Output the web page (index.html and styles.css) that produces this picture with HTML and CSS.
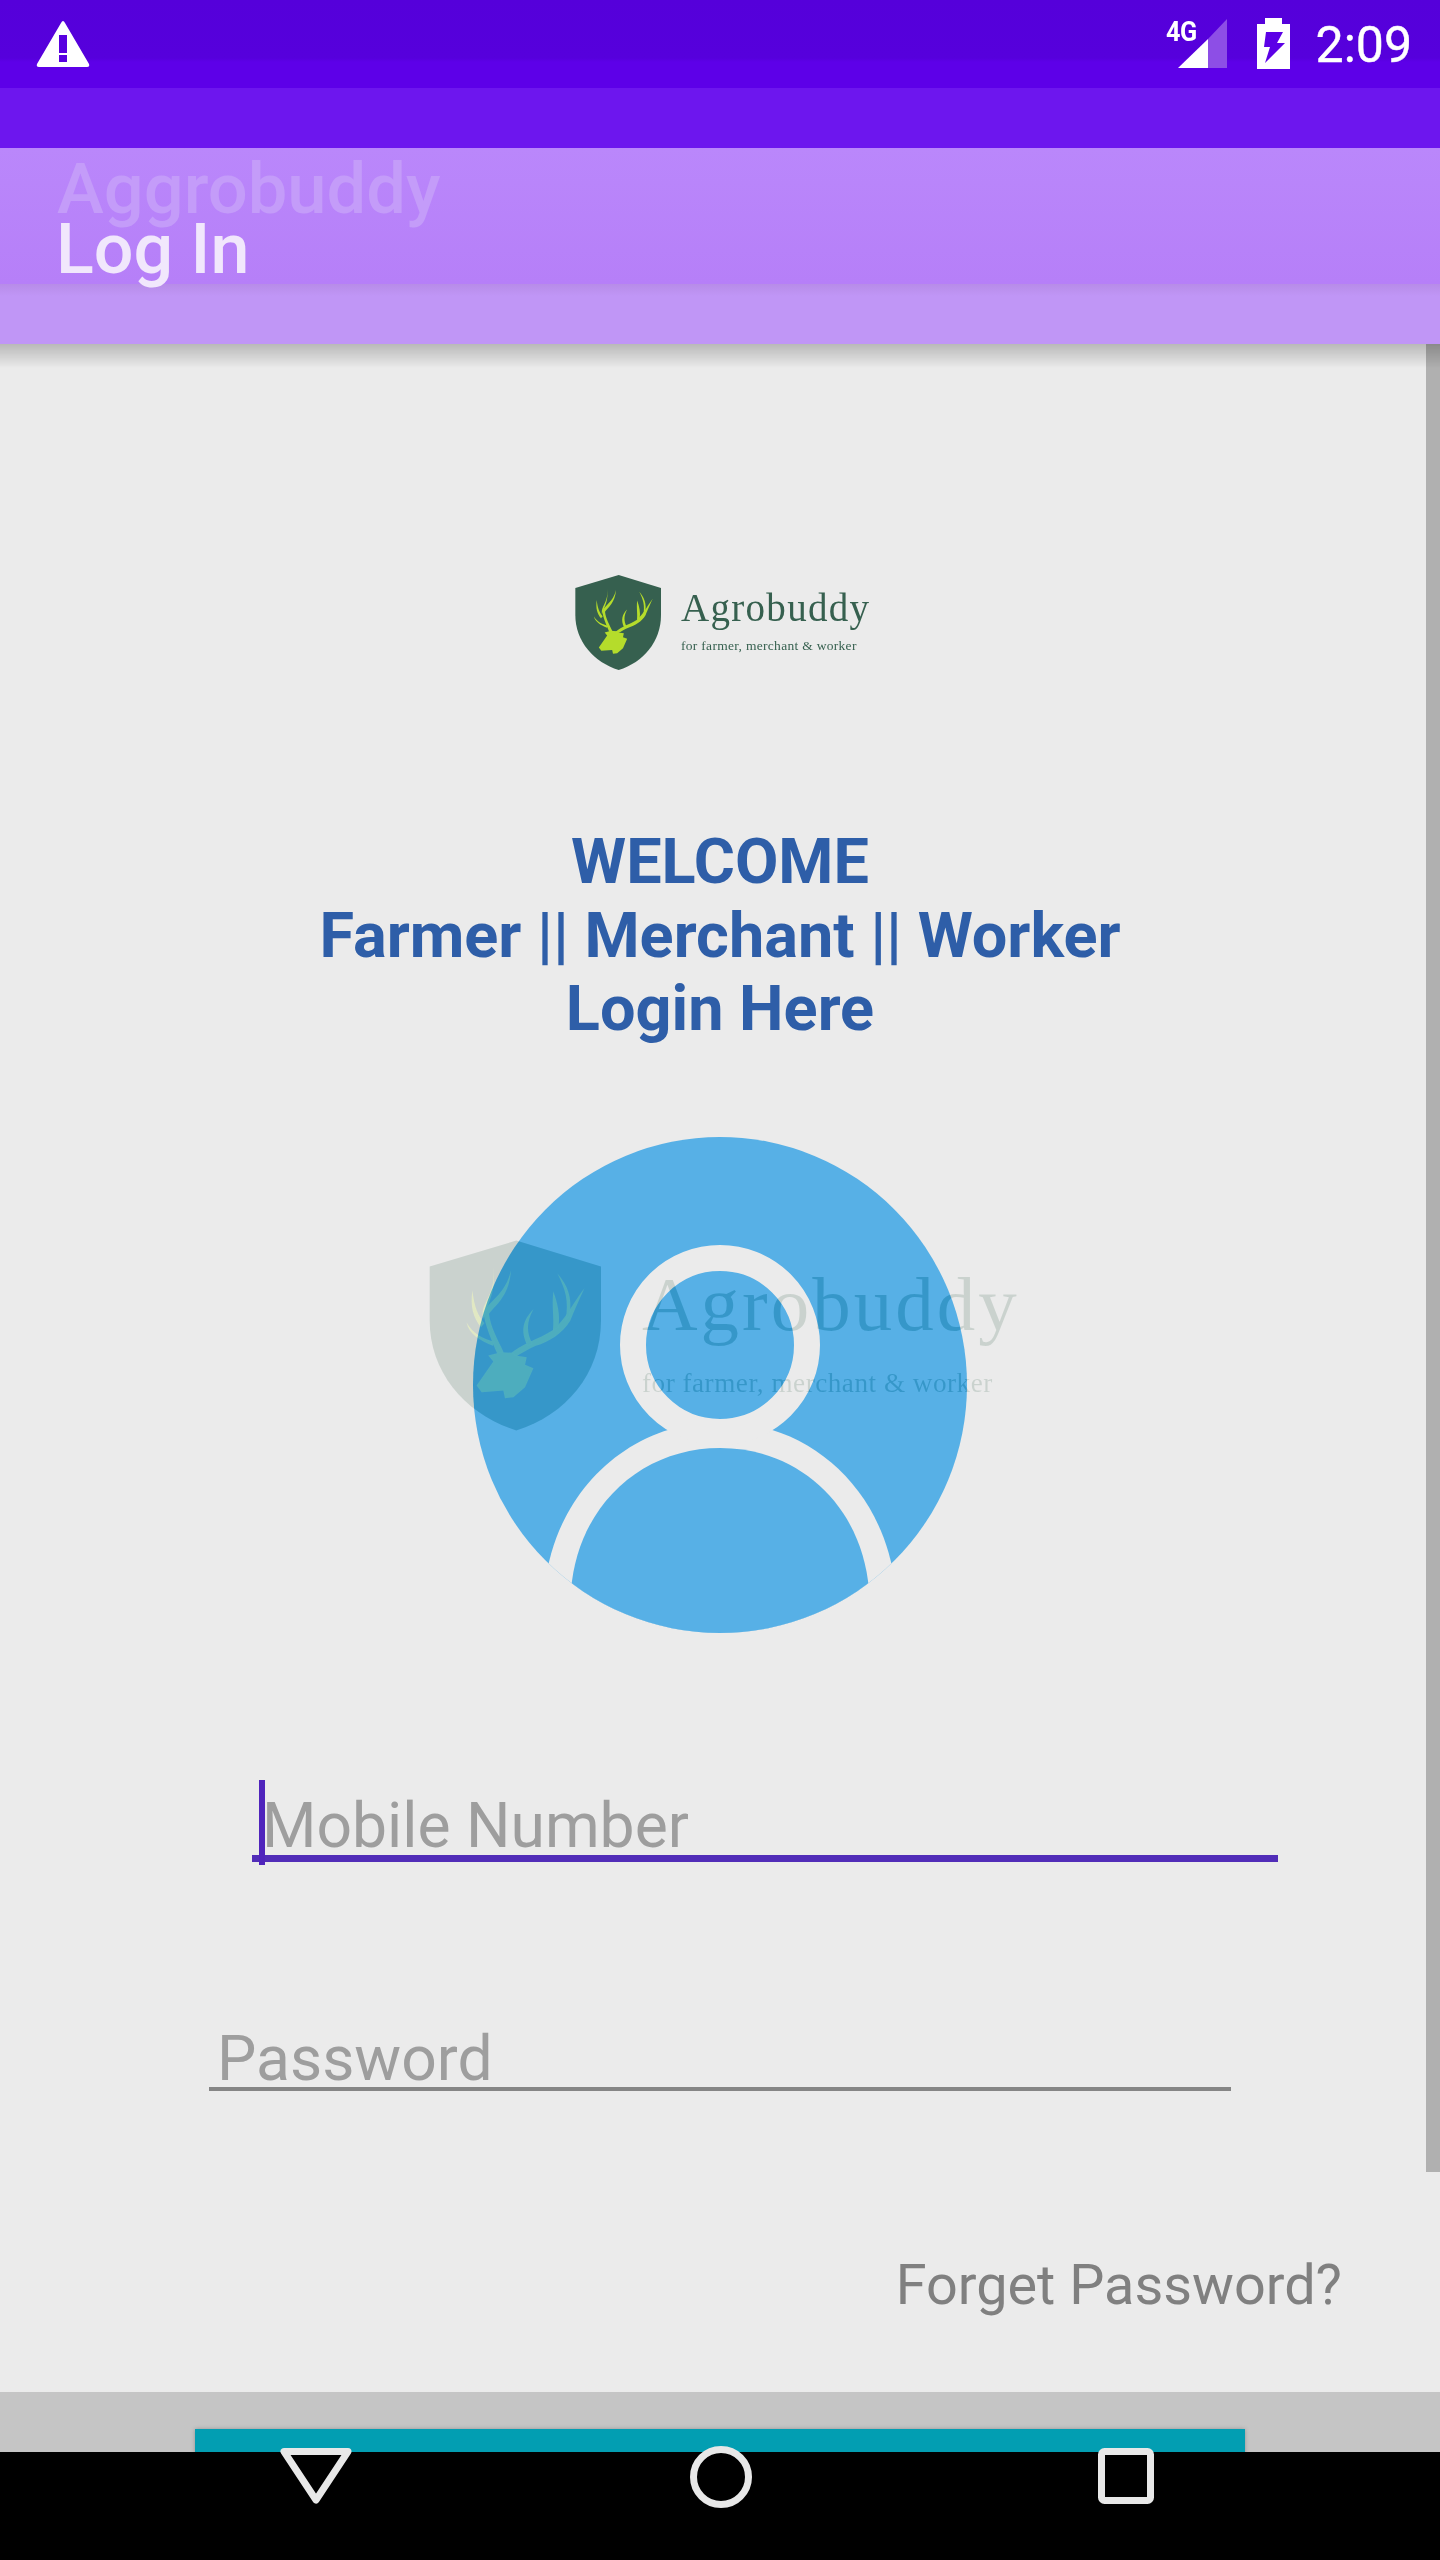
FILE: index.html
```html
<!DOCTYPE html>
<html lang="en">
<head>
<meta charset="utf-8">
<title>Log In</title>
<link rel="stylesheet" href="styles.css">
</head>
<body>
<svg class="defs" width="0" height="0" aria-hidden="true">
  <symbol id="crest" viewBox="0 0 258 285">
    <path class="crest-shield" d="M131 0 L258 39 V120 C258 200 205 262 131 285 C57 262 1 200 1 120 V39 Z"/>
    <g class="crest-deer">
      <path d="M103 171 C94 150 83 125 82 108 C90 90 114 82 123 45 C120 84 100 96 90 110 C92 130 104 150 112 168 Z"/>
      <path d="M96.500 41 C99 68 92 78 84 96 C80 104 80 110 81 118 L86 104 C92 88 100 72 96.500 41 Z"/>
      <path d="M65 75 C62 100 66 115 78 130 L83 124 C73 112 68 100 65 75 Z"/>
      <path d="M56.500 123.500 C60 140 76 150 96 158 L98 152 C80 147 66 140 56.500 123.500 Z"/>
      <path d="M121 171 C138 155 165 148 185 135 C205 118 212 100 233 71.500 C222 96 218 105 212 120 C200 140 180 152 160 158 C148 163 138 170 129 175 Z"/>
      <path d="M193 50 C208 68 215 85 211 112 L205 120 C210 90 205 75 193 50 Z"/>
      <path d="M186.500 76.500 C184 100 188 115 186 135 L194 130 C197 112 193 95 186.500 76.500 Z"/>
      <path d="M156.500 103.500 C142 118 136 135 148 158 L155 155 C146 138 146 122 156.500 103.500 Z"/>
      <path d="M108 167.500 L89 172.500 L96.500 181.500 L71.500 217.500 L79 227.500 L111.500 225 L114 236.500 L126.500 235 L144 220 L156.500 191.500 L144 186.500 L146.500 175 L129 172.500 L125 168.500 Z"/>
    </g>
  </symbol>
</svg>

<div class="screen">
  <header class="statusbar">
    <svg class="warn" width="54" height="48" viewBox="0 0 54 48">
      <path d="M27 1 Q28 1 29 3 L53 44 Q54 47 51 47 H3 Q0 47 1 44 L25 3 Q26 1 27 1 Z" fill="#fff"/>
      <rect x="23" y="15" width="8" height="18" fill="#5800e0"/>
      <rect x="23" y="35" width="8" height="7" fill="#5800e0"/>
    </svg>
    <div class="status-right">
      <div class="signal">
        <span class="signal-label">4G</span>
        <svg width="50" height="50" viewBox="0 0 50 50">
          <path d="M49 0 V49 H30 V20 Z" fill="#8d4ee6"/>
          <path d="M30 20 V49 H0 Z" fill="#fff"/>
        </svg>
      </div>
      <svg class="battery" width="33" height="51" viewBox="0 0 33 51">
        <path d="M8 0 H25 V6 H33 V51 H0 V6 H8 Z" fill="#fff"/>
        <path d="M9 14 H26 L20 25 H28 L8 45 L13 29 H7 Z" fill="#5c00e6"/>
      </svg>
      <span class="clock">2:09</span>
    </div>
  </header>

  <div class="band"></div>

  <div class="appbar">
    <div class="appbar-main">
      <div class="title-old">Aggrobuddy</div>
      <div class="title-new">Log In</div>
    </div>
    <div class="appbar-strip"></div>
  </div>

  <main class="content">
    <div class="scrollthumb"></div>

    <div class="logo logo-top">
      <svg class="logo-crest"><use href="#crest"/></svg>
      <div class="logo-text">
        <div class="logo-name">Agrobuddy</div>
        <div class="logo-tag">for farmer, merchant &amp; worker</div>
      </div>
    </div>

    <h1 class="welcome">WELCOME<br>Farmer || Merchant || Worker<br>Login Here</h1>

    <div class="avatar">
      <svg width="494" height="496" viewBox="473 1137 494 496">
        <defs>
          <clipPath id="avatar-clip"><ellipse cx="720" cy="1385" rx="247" ry="248"/></clipPath>
        </defs>
        <ellipse cx="720" cy="1385" rx="247" ry="248" fill="#57b0e6"/>
        <g clip-path="url(#avatar-clip)">
          <path d="M545 1640 V1585 C556 1490 630 1422 720 1422 C810 1422 884 1490 895 1585 V1640 Z" fill="#ebebeb"/>
          <path d="M571 1640 V1590 C578 1505 642 1448 720 1448 C798 1448 862 1505 869 1590 V1640 Z" fill="#57b0e6"/>
        </g>
        <circle cx="720" cy="1345" r="87" fill="#57b0e6" stroke="#ebebeb" stroke-width="26"/>
      </svg>
      <div class="logo logo-mark">
        <svg class="logo-crest"><use href="#crest"/></svg>
        <div class="logo-text">
          <div class="logo-name">Agrobuddy</div>
          <div class="logo-tag">for farmer, merchant &amp; worker</div>
        </div>
      </div>
    </div>

    <div class="field field-mobile">
      <span class="caret"></span>
      <span class="field-text">Mobile Number</span>
    </div>
    <div class="field field-password">
      <span class="field-text">Password</span>
    </div>

    <div class="forgot">Forget Password?</div>
  </main>

  <div class="action-band"><div class="action-button"></div></div>

  <nav class="navbar">
    <svg class="nav-back" width="72" height="56" viewBox="0 0 72 56">
      <path d="M4 3.500 H68 L36 52 Z" fill="none" stroke="#e8e8e8" stroke-width="7" stroke-linejoin="round"/>
    </svg>
    <svg class="nav-home" width="62" height="62" viewBox="0 0 62 62">
      <circle cx="31" cy="31" r="27.500" fill="none" stroke="#e8e8e8" stroke-width="7"/>
    </svg>
    <svg class="nav-recent" width="56" height="56" viewBox="0 0 56 56">
      <rect x="3.500" y="3.500" width="49" height="49" rx="3" fill="none" stroke="#e8e8e8" stroke-width="7"/>
    </svg>
  </nav>
</div>
</body>
</html>
```

FILE: styles.css
```css
* { box-sizing: border-box; }
html, body { margin: 0; padding: 0; }
body { font-family: Roboto, "Liberation Sans", sans-serif; background: #ebebeb; }
.defs { position: absolute; }

.crest-shield { fill: var(--shield); }
.crest-deer { fill: var(--deer); }

.screen { width: 1440px; height: 2560px; display: flex; flex-direction: column; overflow: hidden; }

.statusbar {
  height: 88px; flex: none; display: flex; justify-content: space-between; align-items: flex-start;
  padding: 20px 28px 0 36px; color: #fff;
  background: linear-gradient(#5500da 0, #5600dc 58px, #5d00e8 62px, #5d00e8 100%);
}
.warn { display: block; }
.status-right { display: flex; align-items: flex-start; }
.signal { position: relative; width: 61px; height: 50px; margin-top: -1px; display: flex; justify-content: flex-end; }
.signal-label { position: absolute; left: -1px; top: -2px; font-size: 28px; line-height: 30px; font-weight: 700; letter-spacing: -.5px; transform: scaleX(.9); transform-origin: left top; }
.battery { display: block; margin: -2px 0 0 29px; }
.clock { margin-left: 26px; font-size: 50px; line-height: 50px; font-weight: 400; -webkit-text-stroke: .4px #fff; }

.band { height: 60px; flex: none; background: #6d16ee; }

.appbar { flex: none; height: 196px; position: relative; z-index: 2; }
.appbar::after {
  content: ""; position: absolute; left: 0; right: 0; top: 100%; height: 24px;
  background: linear-gradient(rgba(0,0,0,.21), rgba(0,0,0,0));
}
.appbar-main { height: 136px; padding: 0 0 0 57px; background: linear-gradient(#ba87fb, #b67ff8); }
.appbar-strip { height: 60px; background: linear-gradient(#b78ce8 0, #c096f6 12px); }
.title-old { font-size: 70.500px; line-height: 60px; padding-top: 11px; height: 71px; font-weight: 500; color: #c49cf9; white-space: nowrap; }
.title-new { font-size: 70px; line-height: 60px; font-weight: 500; color: #f1e7fc; white-space: nowrap; margin-left: -1px; }

.content { flex: 1; min-height: 0; position: relative; display: flex; flex-direction: column; align-items: stretch; overflow: hidden; padding-top: 231px; background: #ebebeb; }
.scrollthumb { position: absolute; right: 0; top: 0; width: 14px; height: 1828px; background: #b0b0b0; }

.logo { display: flex; white-space: nowrap; --shield: #36604f; --deer: #b5dc2b; --ink: #36604f; }
.logo-crest { display: block; flex: none; }
.logo-name, .logo-tag { font-family: "Liberation Serif", "DejaVu Serif", serif; color: var(--ink); }

.logo-top { align-self: flex-start; margin-left: 575px; height: 95px; }
.logo-top .logo-crest { width: 86px; height: 95px; }
.logo-top .logo-text { margin-left: 20px; padding-top: 11px; }
.logo-top .logo-name { font-size: 39px; line-height: 44px; letter-spacing: 1.300px; }
.logo-top .logo-tag { font-size: 13.500px; line-height: 18px; margin-top: 7px; letter-spacing: .3px; }

.welcome {
  margin: 155px 0 0; font-size: 63px; line-height: 73.500px; font-weight: 700; text-align: center; color: #2e5ea8;
}

.avatar { position: relative; align-self: flex-start; margin: 91px 0 0 473px; width: 494px; height: 496px; }
.avatar > svg { display: block; }
.logo-mark { position: absolute; left: -44px; top: 103px; mix-blend-mode: difference; --shield: #21191d; --deer: #0a0328; --ink: #21191d; }
.logo-mark .logo-crest { width: 172px; height: 191px; }
.logo-mark .logo-text { margin-left: 41px; padding-top: 20px; }
.logo-mark .logo-name { font-size: 77px; line-height: 88px; letter-spacing: 3px; }
.logo-mark .logo-tag { font-size: 27.200px; line-height: 36px; margin-top: 17px; letter-spacing: .5px; }

.field { position: relative; align-self: flex-start; color: #9e9e9e; font-size: 62.400px; line-height: 76px; white-space: nowrap; }
.field-mobile { margin: 222px 0 0 252px; width: 1026px; height: 7px; display: block; border-bottom: 7px solid #512db8; }
.field-mobile .field-text { position: absolute; left: 10px; bottom: -9px; }
.caret { position: absolute; left: 7px; top: -75px; width: 6px; height: 85px; background: #4f24bc; z-index: 1; }
.field-password { margin: 225px 0 0 209px; width: 1022px; height: 4px; border-bottom: 4px solid #858585; }
.field-password .field-text { position: absolute; left: 8px; bottom: -10px; }

.forgot { margin: 161px 98px 0 0; align-self: flex-end; font-size: 55.800px; line-height: 66px; color: #808080; white-space: nowrap; }

.action-band { flex: none; height: 60px; background: #c5c5c5; padding: 37px 195px 0; overflow: hidden; }
.action-button { height: 60px; background: #029eb2; box-shadow: 0 0 4px rgba(0,0,0,.25); }

.navbar { flex: none; height: 108px; background: #000; display: flex; align-items: flex-start; padding-left: 280px; position: relative; }
.navbar svg { display: block; flex: none; position: relative; }
.nav-back { margin-top: -4px; }
.nav-home { margin: -6px 0 0 338px; }
.nav-recent { margin: -4px 0 0 346px; }
```
